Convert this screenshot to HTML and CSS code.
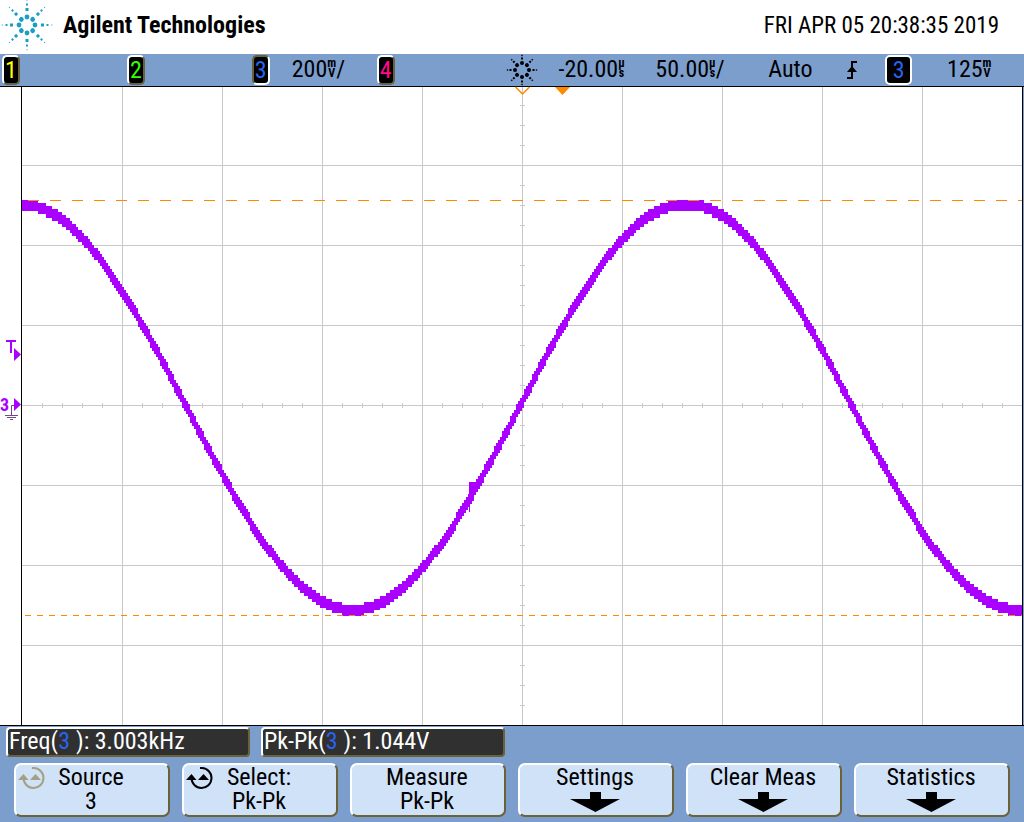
FILE: index.html
```
<!DOCTYPE html>
<html lang="en">
<head>
<meta charset="utf-8">
<title>Agilent Technologies</title>
<link rel="stylesheet" href="styles.css">
</head>
<body>
<div class="scope">
  <header class="brand-bar">
    <svg class="logo" viewBox="-26 -26 52 52" aria-hidden="true">
      <defs>
        <g id="ray"><circle cx="8" cy="0" r="2.4"/><rect x="14" y="-1.5" width="3" height="3"/><rect x="19.5" y="-1" width="2" height="2"/><rect x="24.3" y="-.5" width="1" height="1"/></g>
      </defs>
      <use href="#ray"/><use href="#ray" transform="rotate(45)"/><use href="#ray" transform="rotate(90)"/><use href="#ray" transform="rotate(135)"/><use href="#ray" transform="rotate(180)"/><use href="#ray" transform="rotate(225)"/><use href="#ray" transform="rotate(270)"/><use href="#ray" transform="rotate(315)"/>
    </svg>
    <h1 class="brand">Agilent Technologies</h1>
    <time class="clock">FRI APR 05 20:38:35 2019</time>
  </header>

  <section class="status">
    <span><b class="badge ch1">1</b></span>
    <span><b class="badge ch2">2</b></span>
    <span class="channel"><b class="badge ch3 active">3</b><span class="reading">200<span class="unit"><i>m</i><i>V</i></span>/</span></span>
    <span><b class="badge ch4">4</b></span>
    <svg class="spark" viewBox="-16 -16 32 32" aria-hidden="true">
      <defs>
        <g id="spark-ray"><circle cx="7" cy="0" r="2"/><rect x="10.5" y="-1" width="2" height="2"/><rect x="13.8" y="-.7" width="1.4" height="1.4"/></g>
      </defs>
      <use href="#spark-ray"/><use href="#spark-ray" transform="rotate(45)"/><use href="#spark-ray" transform="rotate(90)"/><use href="#spark-ray" transform="rotate(135)"/><use href="#spark-ray" transform="rotate(180)"/><use href="#spark-ray" transform="rotate(225)"/><use href="#spark-ray" transform="rotate(270)"/><use href="#spark-ray" transform="rotate(315)"/>
    </svg>
    <span class="reading">-20.00<span class="unit"><i>µ</i><i>s</i></span></span>
    <span class="reading">50.00<span class="unit"><i>µ</i><i>s</i></span>/</span>
    <span class="reading">Auto</span>
    <svg class="edge" viewBox="0 0 12 20" aria-hidden="true"><path d="M1 18H6V2H11" fill="none" stroke="#000" stroke-width="2"/><path d="M6 6 11 12H1Z"/></svg>
    <span><b class="badge trigger ch3">3</b></span>
    <span class="reading">125<span class="unit"><i>m</i><i>V</i></span></span>
  </section>

  <svg class="plot" viewBox="0 0 1024 640" role="img" aria-label="Channel 3 waveform">
    <rect width="1024" height="640" fill="#fff"/>
    <rect x="1022" width="2" height="640" fill="#7c9ecd"/>
    <g class="crisp">
      <path id="grid" class="grid"/>
      <path id="trace" class="trace"/>
      <path class="trace" d="M469 396h5v12h-5zM469 408h1v18h-1z"/>
      <path class="cursor" stroke-dasharray="11 11" d="M28 114.5H1022"/>
      <path class="cursor low" stroke-dasharray="6 6" d="M25 529.5H1022"/>
      <path d="M21 0H1023V640H21ZM22 1V639H1022V1Z" fill-rule="evenodd"/>
      <path d="M0 0H1024V1H0ZM0 639H1024V640H0Z"/>
    </g>
    <path d="M515.5 1 522.5 8 529.5 1" fill="none" stroke="#ff8800" stroke-width="1.5"/>
    <path d="M555 1H570L562.500 9Z" fill="#ff8800"/>
    <g fill="#a900ff">
      <path d="M14 262 21 268.500 14 275ZM14 312 21 318.500 14 325Z"/>
      <path class="crisp" d="M6 254H16V256H12V267H10V256H6Z"/>
      <text class="marker" x="0" y="325">3</text>
    </g>
    <path d="M14 319.500H11.500V330M5 329.500H18M7 331.500H16M10 333.500H13" fill="none" stroke="#704b86"/>
  </svg>

  <footer class="panel">
    <div class="measures">
      <output class="measure">Freq(<span class="source">3</span>): 3.003kHz</output>
      <output class="measure">Pk-Pk(<span class="source">3</span>): 1.044V</output>
    </div>
    <nav class="softkeys">
      <button class="key"><svg class="knob idle" viewBox="0 0 28 24" aria-hidden="true"><use href="#knob"/></svg>Source<br>3</button>
      <button class="key"><svg class="knob" viewBox="0 0 28 24" aria-hidden="true"><g id="knob"><path d="M14 1H16A10 10 0 1 1 5.500 11" fill="none" stroke="currentColor" stroke-width="2"/><path d="M0 13 5.500 7 10.500 13ZM12 13 17.500 7 23 13Z" fill="currentColor"/></g></svg>Select:<br>Pk-Pk</button>
      <button class="key">Measure<br>Pk-Pk</button>
      <button class="key">Settings<svg class="arrow" viewBox="0 0 50 20" aria-hidden="true"><path d="M20 0H31V7H50L25.500 20 0 7H20Z"/></svg></button>
      <button class="key">Clear Meas<svg class="arrow" viewBox="0 0 50 20" aria-hidden="true"><path d="M20 0H31V7H50L25.500 20 0 7H20Z"/></svg></button>
      <button class="key">Statistics<svg class="arrow" viewBox="0 0 50 20" aria-hidden="true"><path d="M20 0H31V7H50L25.500 20 0 7H20Z"/></svg></button>
    </nav>
  </footer>
</div>
<script src="plot.js"></script>
</body>
</html>
```
FILE: styles.css
```
* { box-sizing: border-box; }
body {
  margin: 0;
  background: #7c9ecd;
  color: #000;
  font: 24px/24px "Roboto Condensed", "Liberation Sans Narrow", "DejaVu Sans Condensed", sans-serif;
}
.scope { display: flex; flex-direction: column; }
.brand-bar {
  display: flex;
  align-items: center;
  height: 54px;
  padding: 0 25px 4px 1px;
  background: #fff;
}
.logo { width: 52px; height: 52px; fill: #1a9fc4; }
.brand { margin: 0 auto 0 10px; font-size: 24px; line-height: 24px; font-weight: bold; }
.clock { padding-top: 2px; font-size: 23px; }
.status {
  display: grid;
  grid-template-columns: 125fr 125fr 125fr 129fr 53fr 97fr 113fr 78fr 39fr 62fr 77fr;
  align-items: center;
  height: 32px;
  padding-left: 2px;
  white-space: nowrap;
}
.status > * { min-width: 0; }
.reading { height: 26px; }
.channel { display: flex; align-items: center; gap: 22px; }
.badge {
  display: block;
  width: 18px;
  height: 30px;
  border: 2px solid;
  border-color: #fff #6b6237 #6b6237 #fff;
  border-radius: 5px;
  background: #000;
  font-weight: normal;
  line-height: 26px;
  text-align: center;
}
.badge.active { border-color: #6b6237 #fff #fff #6b6237; }
.badge.trigger { width: 27px; border-color: #fff; }
.ch1 { color: #ffff00; }
.ch2 { color: #33ff00; }
.ch3 { color: #2864f0; }
.ch4 { color: #ff0a87; }
.unit {
  display: inline-flex;
  flex-direction: column;
  align-items: center;
  vertical-align: 10px;
  height: 16px;
  font-size: 12px;
  line-height: 10px;
  font-weight: bold;
}
.unit i { height: 10px; font-style: normal; }
.spark { width: 32px; height: 32px; }
.edge { width: 12px; height: 20px; }
.plot { display: block; width: 100%; height: auto; }
.crisp { shape-rendering: crispEdges; }
.grid { fill: none; stroke: #c8c8c8; }
.trace { fill: #a900ff; }
.cursor { fill: none; stroke: #ff8800; }
.marker { font-size: 18px; font-weight: bold; }
.panel { padding: 1px 14px 5px; }
.measures { display: flex; gap: 11px; margin: 0 -8px 6px; }
.measure {
  width: 244px;
  height: 30px;
  padding: 0 1px;
  border: 2px solid;
  border-color: #fff #6b6237 #6b6237 #fff;
  border-radius: 4px;
  background: #303030;
  color: #fff;
  line-height: 24px;
  white-space: nowrap;
}
.source { padding-right: 6px; color: #2864f0; }
.softkeys { display: grid; grid-template-columns: repeat(6, 1fr); gap: 12px; }
.key {
  position: relative;
  height: 54px;
  padding: 0 2px 2px 0;
  border: 2px solid;
  border-color: #fff #6b6237 #6b6237 #fff;
  border-radius: 7px;
  background: #d0e2f8;
  color: #000;
  font: inherit;
}
.knob { position: absolute; left: 2px; top: 2px; width: 28px; height: 24px; }
.idle { color: #a3a183; }
.arrow { display: block; width: 50px; height: 20px; margin: 3px auto 1px; }
```
FILE: plot.js
```
// Graticule: 10 x 8 divisions with ticks every 20 units on the centre axes.
let grid = "";
for (let x = 122.5; x < 1022; x += 100) grid += `M${x} 1V639`;
for (let y = 79.5; y < 639; y += 80) grid += `M22 ${y}H1022`;
for (let x = 42.5; x < 1022; x += 20) grid += `M${x} 317V322`;
for (let y = 19.5; y < 639; y += 20) grid += `M520 ${y}H525`;
document.getElementById("grid").setAttribute("d", grid);

// Sampled sine, quantised to 3-unit vertical steps; steep parts span one more step.
let trace = "";
for (let x = 22; x < 1022; x += 2) {
  const phase = (x - 685) * 2 * Math.PI / 666;
  const y = 321 - 203 * Math.cos(phase);
  const height = 11 + Math.round(2 * Math.abs(Math.sin(phase)));
  const top = Math.round((y - height / 2) / 3) * 3;
  trace += `M${x} ${top}h2v${height}h-2z`;
}
document.getElementById("trace").setAttribute("d", trace);
```
